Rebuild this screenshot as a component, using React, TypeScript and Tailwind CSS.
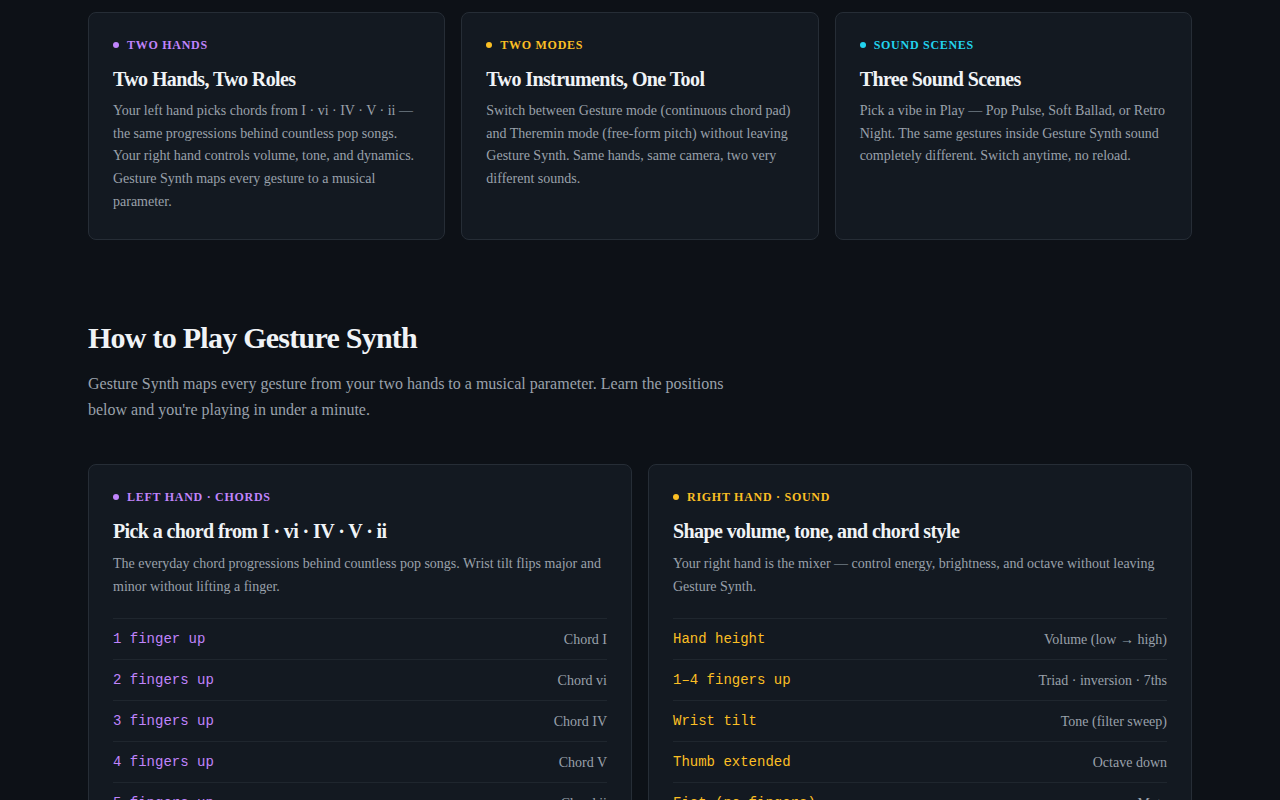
import React from "react";

const serif = { fontFamily: '"Liberation Serif", "Times New Roman", serif' };
const mono = { fontFamily: '"Liberation Mono", "Courier New", monospace' };

type Accent = "purple" | "yellow" | "cyan";

const dotClass: Record<Accent, string> = {
  purple: "bg-[#c084fc]",
  yellow: "bg-[#fbbf24]",
  cyan: "bg-[#22d3ee]",
};
const labelClass: Record<Accent, string> = {
  purple: "text-[#c084fc]",
  yellow: "text-[#fbbf24]",
  cyan: "text-[#22d3ee]",
};

function Label({ accent, children }: { accent: Accent; children: React.ReactNode }) {
  return (
    <div className="flex items-center gap-2">
      <span className={`w-[6px] h-[6px] rounded-full ${dotClass[accent]}`} />
      <span
        className={`text-[12px] font-bold uppercase tracking-[0.06em] leading-none ${labelClass[accent]}`}
      >
        {children}
      </span>
    </div>
  );
}

const features: { accent: Accent; label: string; title: string; body: string }[] = [
  {
    accent: "purple",
    label: "Two Hands",
    title: "Two Hands, Two Roles",
    body:
      "Your left hand picks chords from I · vi · IV · V · ii — the same progressions behind countless pop songs. Your right hand controls volume, tone, and dynamics. Gesture Synth maps every gesture to a musical parameter.",
  },
  {
    accent: "yellow",
    label: "Two Modes",
    title: "Two Instruments, One Tool",
    body:
      "Switch between Gesture mode (continuous chord pad) and Theremin mode (free-form pitch) without leaving Gesture Synth. Same hands, same camera, two very different sounds.",
  },
  {
    accent: "cyan",
    label: "Sound Scenes",
    title: "Three Sound Scenes",
    body:
      "Pick a vibe in Play — Pop Pulse, Soft Ballad, or Retro Night. The same gestures inside Gesture Synth sound completely different. Switch anytime, no reload.",
  },
];

const hands: {
  accent: Accent;
  label: string;
  title: string;
  body: string;
  rows: [string, string][];
}[] = [
  {
    accent: "purple",
    label: "Left Hand · Chords",
    title: "Pick a chord from I · vi · IV · V · ii",
    body:
      "The everyday chord progressions behind countless pop songs. Wrist tilt flips major and minor without lifting a finger.",
    rows: [
      ["1 finger up", "Chord I"],
      ["2 fingers up", "Chord vi"],
      ["3 fingers up", "Chord IV"],
      ["4 fingers up", "Chord V"],
      ["5 fingers up", "Chord ii"],
    ],
  },
  {
    accent: "yellow",
    label: "Right Hand · Sound",
    title: "Shape volume, tone, and chord style",
    body:
      "Your right hand is the mixer — control energy, brightness, and octave without leaving Gesture Synth.",
    rows: [
      ["Hand height", "Volume (low → high)"],
      ["1–4 fingers up", "Triad · inversion · 7ths"],
      ["Wrist tilt", "Tone (filter sweep)"],
      ["Thumb extended", "Octave down"],
      ["Fist (no fingers)", "Mute"],
    ],
  },
];

export default function App() {
  return (
    <div className="min-h-screen bg-[#0d1117] text-[#e6edf3]" style={serif}>
      <div className="w-[1104px] mx-auto pt-[12px] pb-16">
        {/* feature cards */}
        <div className="grid grid-cols-3 gap-4">
          {features.map((f) => (
            <div
              key={f.title}
              className="h-[228px] rounded-[8px] border border-[#262d36] bg-[#131921] px-6 pt-[26px]"
            >
              <Label accent={f.accent}>{f.label}</Label>
              <h3 className="mt-[15px] text-[20px] font-bold tracking-[-0.03em] leading-[26px] text-[#f0f3f6]">
                {f.title}
              </h3>
              <p className="mt-[8px] text-[14px] leading-[22.7px] text-[#9aa1ab]">{f.body}</p>
            </div>
          ))}
        </div>

        {/* how to play */}
        <h2 className="mt-[79px] text-[30px] font-bold tracking-[-0.025em] leading-[38px] text-[#f0f3f6]">
          How to Play Gesture Synth
        </h2>
        <p className="mt-[14px] max-w-[640px] text-[16px] leading-[26px] text-[#9aa1ab]">
          Gesture Synth maps every gesture from your two hands to a musical parameter. Learn the
          positions below and you're playing in under a minute.
        </p>

        <div className="mt-[41px] grid grid-cols-2 gap-4">
          {hands.map((h) => (
            <div
              key={h.label}
              className="rounded-[8px] border border-[#262d36] bg-[#131921] px-6 pt-[26px]"
            >
              <Label accent={h.accent}>{h.label}</Label>
              <h3 className="mt-[15px] text-[20px] font-bold tracking-[-0.03em] leading-[26px] text-[#f0f3f6]">
                {h.title}
              </h3>
              <p className="mt-[8px] text-[14px] leading-[23px] text-[#9aa1ab]">{h.body}</p>
              <div className="mt-[20px] border-t border-[#1f262e]">
                {h.rows.map(([k, v]) => (
                  <div
                    key={k}
                    className="flex items-center justify-between h-[41px] border-b border-[#1f262e]"
                  >
                    <span className={`text-[14px] ${labelClass[h.accent]}`} style={mono}>
                      {k}
                    </span>
                    <span className="text-[14px] text-[#9aa1ab]">{v}</span>
                  </div>
                ))}
              </div>
            </div>
          ))}
        </div>
      </div>
    </div>
  );
}
